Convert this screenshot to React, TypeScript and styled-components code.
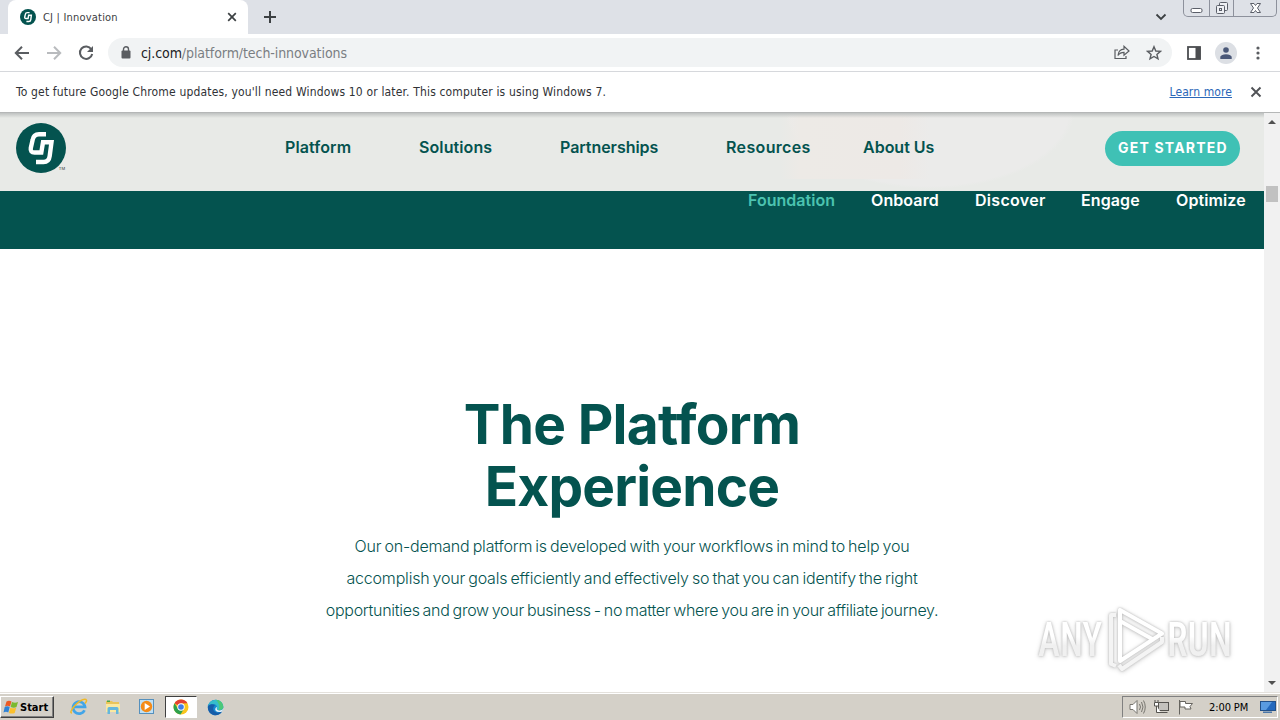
import styled, { createGlobalStyle } from "styled-components";

const Color = {
  Green: "#04534f",
  Teal: "#3fc1b5",
  Chrome: "#dee1e7",
  Icon: "#5a5d61",
  Taskbar: "#d4d0c8",
};

const siteMenu = [
  { label: "Platform", gap: 0, width: 66, track: 0.1 },
  { label: "Solutions", gap: 68, width: 73, track: 0.1 },
  { label: "Partnerships", gap: 68, width: 98, track: -0.05 },
  { label: "Resources", gap: 68, width: 85, track: 0.35 },
  { label: "About Us", gap: 52, width: 71, track: 0 },
];

const sections = [
  { label: "Foundation", gap: 0, width: 87, track: 0.02 },
  { label: "Onboard", gap: 36, width: 68, track: 0.1 },
  { label: "Discover", gap: 36, width: 70, track: 0.3 },
  { label: "Engage", gap: 36, width: 59, track: 0.1 },
  { label: "Optimize", gap: 36, width: 70, track: 0.1 },
];

const copy = [
  { text: "Our on-demand platform is developed with your workflows in mind to help you", track: -0.19 },
  { text: "accomplish your goals efficiently and effectively so that you can identify the right", track: -0.19 },
  { text: "opportunities and grow your business - no matter where you are in your affiliate journey.", track: -0.29 },
];

const CjLogo = ({ size }: { size: number }) => (
  <svg width={size} height={size} viewBox="0 0 50 50">
    <circle cx="25" cy="25" r="25" fill={Color.Green} />
    <path
      d="M30 11.2H23Q17.5 11.2 16.6 17L14.8 25Q14 29.5 18.5 29.5H25.3L27 19.3H35.5L33.7 33Q33 39 27.5 39H20"
      fill="none"
      stroke="#fff"
      strokeWidth="4.4"
    />
  </svg>
);

const TabStrip = () => (
  <Strip>
    <Tab>
      <CjLogo size={16} />
      <TabTitle>CJ | Innovation</TabTitle>
      <svg width="10" height="10" viewBox="0 0 10 10">
        <path d="M1.2 1.2L8.8 8.8M8.8 1.2L1.2 8.8" stroke="#3c4043" strokeWidth="1.7" />
      </svg>
    </Tab>
    <NewTab width="14" height="14" viewBox="0 0 14 14">
      <path d="M7 1V13M1 7H13" stroke="#3c4043" strokeWidth="2" />
    </NewTab>
    <TabSearch width="12" height="8" viewBox="0 0 12 8">
      <path d="M1.5 1.5L6 6L10.5 1.5" fill="none" stroke="#3c4043" strokeWidth="1.8" />
    </TabSearch>
    <WindowButtons>
      <WindowButton $width={25}>
        <svg width="13" height="17" viewBox="0 0 13 17">
          <rect x="1" y="8.5" width="11" height="4" rx="1.5" fill="#fff" stroke="#5b5f69" />
        </svg>
      </WindowButton>
      <WindowButton $width={25}>
        <svg width="14" height="17" viewBox="0 0 14 17" fill="#eef0f4" stroke="#5b5f69">
          <rect x="4.5" y="2.5" width="8" height="8" rx="1" />
          <rect x="1.5" y="5.5" width="8" height="8" rx="1" />
          <rect x="4.5" y="8.5" width="2" height="2" />
        </svg>
      </WindowButton>
      <WindowButton $width={43}>
        <svg width="13" height="17" viewBox="0 0 13 17">
          <path
            d="M1.5 3.5H5L6.5 5.5L8 3.5H11.5L8.5 8L11.5 12.5H8L6.5 10.5L5 12.5H1.5L4.5 8Z"
            fill="#fff"
            stroke="#5b5f69"
          />
        </svg>
      </WindowButton>
    </WindowButtons>
  </Strip>
);

const AddressBar = () => (
  <Toolbar>
    <ToolIcon $gap={14} width="16" height="16" viewBox="0 0 16 16">
      <path d="M15 8H2M8 1.8L1.8 8L8 14.2" fill="none" stroke={Color.Icon} strokeWidth="2" />
    </ToolIcon>
    <ToolIcon $gap={16} width="16" height="16" viewBox="0 0 16 16">
      <path d="M1 8H14M8 1.8L14.2 8L8 14.2" fill="none" stroke="#b9bbbe" strokeWidth="2" />
    </ToolIcon>
    <ToolIcon $gap={16} width="16" height="16" viewBox="0 0 16 16">
      <path d="M13.3 4.2A6.2 6.2 0 1 0 14.2 9" fill="none" stroke={Color.Icon} strokeWidth="2" />
      <path d="M15 1V7H9Z" fill={Color.Icon} />
    </ToolIcon>
    <Omnibox>
      <svg width="10" height="13" viewBox="0 0 10 13">
        <rect x="0.5" y="4.5" width="9" height="8" rx="1" fill={Color.Icon} />
        <path d="M2.5 5V3.3A2.5 2.5 0 0 1 7.5 3.3V5" fill="none" stroke={Color.Icon} strokeWidth="1.4" />
      </svg>
      <Url>
        <b>cj.com</b>/platform/tech-innovations
      </Url>
      <svg width="16" height="15" viewBox="0 0 16 15" fill="none" stroke={Color.Icon} strokeWidth="1.2">
        <path d="M4 5H1V13.5H12V11" />
        <path d="M4 10.5Q4.5 4.5 10 4.2V1.3L15 6L10 10.2V7.4Q6 7.4 4 10.5Z" />
      </svg>
      <StarIcon width="16" height="16" viewBox="0 0 16 16">
        <path
          d="M8 1.7L9.8 6L14.4 6.4L10.9 9.4L12 13.9L8 11.5L4 13.9L5.1 9.4L1.6 6.4L6.2 6Z"
          fill="none"
          stroke={Color.Icon}
          strokeWidth="1.4"
        />
      </StarIcon>
    </Omnibox>
    <ToolIcon $gap={15} width="14" height="14" viewBox="0 0 14 14">
      <rect x="1" y="1" width="12" height="12" fill="none" stroke="#4b4d50" strokeWidth="1.8" />
      <rect x="8.5" y="1" width="5" height="12" fill="#4b4d50" />
    </ToolIcon>
    <Avatar>
      <svg width="12" height="12" viewBox="0 0 12 12" fill="#4a5878">
        <circle cx="6" cy="3" r="2.8" />
        <path d="M0.3 12V9.8Q1.5 7.2 6 7.2T11.7 9.8V12Z" />
      </svg>
    </Avatar>
    <ToolIcon $gap={19} width="4" height="14" viewBox="0 0 4 14" fill={Color.Icon}>
      <circle cx="2" cy="2" r="1.6" />
      <circle cx="2" cy="7" r="1.6" />
      <circle cx="2" cy="12" r="1.6" />
    </ToolIcon>
  </Toolbar>
);

const Watermark = () => (
  <WatermarkSvg width="216" height="74" viewBox="0 0 216 74">
    <defs>
      <linearGradient id="fade" x1="0" y1="0" x2="0" y2="1">
        <stop offset="0.45" stopColor="#fff" />
        <stop offset="0.6" stopColor="#f0f0f0" />
      </linearGradient>
    </defs>
    <g fill="url(#fade)" fontFamily="Roboto, sans-serif" fontSize="49" fontWeight="500">
      <text transform="translate(8 52) scale(0.76 1)">ANY</text>
      <text transform="translate(137 52) scale(0.77 1)">RUN</text>
    </g>
    <g fill="none" stroke="#fff" strokeWidth="4" strokeLinejoin="round">
      <path d="M90 6V57L132 29.5Z" />
      <path d="M86 11H81V60L86 62M89 61L92 65L132 38V33" stroke="#f4f4f4" />
      <path d="M90 17L124 36" />
    </g>
  </WatermarkSvg>
);

const Taskbar = () => (
  <Bar>
    <StartButton>
      <svg width="17" height="16" viewBox="0 0 17 15">
        <path d="M3.5 2Q6 0.5 8.5 2L7 7Q4.5 5.6 2 7Z" fill="#ec5a24" />
        <path d="M9 2.5Q12 3.8 15 2.5L13.5 7.5Q11 8.8 7.6 7.5Z" fill="#7ab92f" />
        <path d="M1.7 7.5Q4.2 6.2 6.7 7.5L5.3 13Q3 11.7 0.5 13Z" fill="#2f83d6" />
        <path d="M7.3 8.2Q10 9.5 13.2 8.2L11.7 13.5Q9 14.7 5.9 13.5Z" fill="#fbc02d" />
      </svg>
      Start
    </StartButton>
    <TaskButton>
      <svg width="18" height="18" viewBox="0 0 18 18" fill="none">
        <path d="M14.5 12.2A6 6 0 1 1 15 8.8H4" stroke="#42a5e8" strokeWidth="2.7" />
        <path d="M2 15Q-1 15 4 8.5Q12 0 16 1.5Q17.5 2.5 15 5.5" stroke="#efb928" strokeWidth="1.5" />
      </svg>
    </TaskButton>
    <TaskButton>
      <svg width="18" height="18" viewBox="0 0 18 18">
        <path d="M2 3H8L9 4H15V14H2Z" fill="#e9c45a" />
        <path d="M2 6H16V14H2Z" fill="#fae8a0" />
        <path d="M3.5 16V10.5Q3.5 9 5 9H13Q14.5 9 14.5 10.5V16H12V12H6V16Z" fill="#65b7dc" />
        <path d="M3 2.5H6V4H3Z" fill="#49a546" />
      </svg>
    </TaskButton>
    <TaskButton>
      <svg width="18" height="18" viewBox="0 0 18 18">
        <rect x="1.5" y="1.5" width="14" height="14" fill="#bfe0f5" stroke="#5590bd" />
        <circle cx="8.5" cy="8.5" r="5.7" fill="#f48b18" />
        <path d="M6.7 5L12 8.5L6.7 12Z" fill="#fff" />
      </svg>
    </TaskButton>
    <TaskButton $active>
      <svg width="16" height="16" viewBox="0 0 16 16">
        <circle cx="8" cy="8" r="7.5" fill="#f9c51e" />
        <path d="M8 8L1.5 4.25A7.5 7.5 0 0 1 14.5 4.25L8 4.5Z" fill="#e34133" />
        <path d="M1.5 4.25A7.5 7.5 0 0 0 7.5 15.5L11 9.75L5 9.75Z" fill="#2da14d" />
        <circle cx="8" cy="8" r="3.7" fill="#fff" />
        <circle cx="8" cy="8" r="2.8" fill="#3f7de8" />
      </svg>
    </TaskButton>
    <TaskButton>
      <svg width="17" height="17" viewBox="0 0 17 17">
        <circle cx="8.5" cy="8.5" r="7.8" fill="#1688d1" />
        <path d="M1 7Q3 0.7 9 0.7Q16 1.5 16.3 8Q16 11.5 11.5 11Q9 10.5 10 8.5Q10 4.5 5 5Q2 5.5 1 7Z" fill="#35bccb" />
        <path d="M9 0.7Q16 1.5 16.3 8Q16 11.5 11.5 11Q14 6 9 0.7Z" fill="#4cc878" />
        <path d="M1 7Q4 4 8 6Q5 9 7 12Q10 15 15 12.5Q12 17 7 16.2Q0 14 1 7Z" fill="#165ca8" />
        <path d="M10 8Q9 11 12 11.5Q15 11.7 16.5 9.5L15.2 12.5Q10.5 14 8.5 11.5Q7.5 9 10 8Z" fill="#e8f2f8" />
      </svg>
    </TaskButton>
    <Tray>
      <svg width="17" height="16" viewBox="0 0 17 16" fill="none" stroke="#77756f">
        <path d="M1 5.5H4L8 1.5V14.5L4 10.5H1Z" fill="#fff" />
        <path d="M10.5 5Q12.5 8 10.5 11M12.5 3Q15.5 8 12.5 13M14.5 1.5Q18 8 14.5 14.5" />
      </svg>
      <svg width="17" height="16" viewBox="0 0 17 16" fill="#fff" stroke="#55534f">
        <rect x="5.5" y="3.5" width="10" height="8" fill="#c4c2bd" />
        <path d="M2 1V3M5 1V3M1.5 3.5H5.5V7H1.5ZM3.5 7V13.5H8M7.5 13.5H14.5" />
      </svg>
      <svg width="17" height="16" viewBox="0 0 17 16" fill="#fff" stroke="#66645f">
        <path d="M2.5 1V15.5M3 2.5H8.5V4.5H15.5L13 7.5L14 10H8V8H3Z" />
      </svg>
      <Clock>2:00 PM</Clock>
      <svg width="16" height="14" viewBox="0 0 16 14">
        <rect x="0.5" y="1.5" width="15" height="9" fill="#2469bd" stroke="#225089" />
        <path d="M1 2H12L6 10H1Z" fill="#5a9be0" />
        <rect x="3" y="11.5" width="9" height="1.5" fill="#4b76a8" />
      </svg>
    </Tray>
  </Bar>
);

const App = () => {
  return (
    <Screen>
      <GlobalStyle />
      <TabStrip />
      <AddressBar />
      <InfoBar>
        <InfoText>
          To get future Google Chrome updates, you'll need Windows 10 or later. This computer is using Windows 7.
        </InfoText>
        <LearnMore>Learn more</LearnMore>
        <svg width="12" height="12" viewBox="0 0 12 12">
          <path d="M1.5 1.5L10.5 10.5M10.5 1.5L1.5 10.5" stroke="#505256" strokeWidth="1.9" />
        </svg>
      </InfoBar>
      <Viewport>
        <Page>
          <SiteHeader>
            <Brand>
              <CjLogo size={50} />
              <Trademark>TM</Trademark>
            </Brand>
            <SiteMenu>
              {siteMenu.map((item) => (
                <MenuItem key={item.label} $gap={item.gap} $width={item.width} $track={item.track}>
                  {item.label}
                </MenuItem>
              ))}
            </SiteMenu>
            <GetStarted>GET STARTED</GetStarted>
          </SiteHeader>
          <SectionBar>
            {sections.map((item, i) => (
              <SectionItem
                key={item.label}
                $gap={item.gap}
                $width={item.width}
                $track={item.track}
                $active={i === 0}
              >
                {item.label}
              </SectionItem>
            ))}
          </SectionBar>
          <Hero>
            <Title>
              <TitleLine $track={-0.7}>The Platform</TitleLine>
              <TitleLine $track={-0.8}>Experience</TitleLine>
            </Title>
            {copy.map((line) => (
              <CopyLine key={line.text} $track={line.track}>
                {line.text}
              </CopyLine>
            ))}
          </Hero>
          <Watermark />
        </Page>
        <Scrollbar>
          <svg width="8" height="4" viewBox="0 0 8 4">
            <path d="M0 4L4 0L8 4Z" fill="#505050" />
          </svg>
          <Thumb />
          <svg width="8" height="4" viewBox="0 0 8 4">
            <path d="M0 0L4 4L8 0Z" fill="#505050" />
          </svg>
        </Scrollbar>
      </Viewport>
      <Taskbar />
    </Screen>
  );
};

const GlobalStyle = createGlobalStyle`
  * {
    box-sizing: border-box;
  }
  body {
    margin: 0;
    overflow: hidden;
  }
  svg {
    display: block;
    flex-shrink: 0;
  }
`;

const Screen = styled.div`
  width: 1280px;
  height: 720px;
  display: flex;
  flex-direction: column;
  overflow: hidden;
  background: #fff;
  font-family: "DejaVu Sans Condensed", "DejaVu Sans", sans-serif;
  font-stretch: condensed;
  white-space: nowrap;
`;

const Strip = styled.div`
  height: 34px;
  flex-shrink: 0;
  display: flex;
  background: ${Color.Chrome};
`;

const Tab = styled.div`
  width: 240px;
  height: 34px;
  margin-left: 8px;
  padding: 0 11px 0 12px;
  display: flex;
  align-items: center;
  border-radius: 8px 8px 0 0;
  background: #fff;
`;

const TabTitle = styled.div`
  flex: 1;
  margin-left: 7px;
  font-size: 11px;
  letter-spacing: 0.2px;
  color: #3c4043;
`;

const NewTab = styled.svg`
  margin: 10px 0 0 15px;
`;

const TabSearch = styled.svg`
  margin: 13px 16px 0 auto;
`;

const WindowButtons = styled.div`
  display: flex;
  width: 94px;
  height: 17px;
  margin-right: 3px;
  border: 1px solid #8d919c;
  border-top: none;
  border-radius: 0 0 5px 5px;
`;

const WindowButton = styled.div<{ $width: number }>`
  width: ${({ $width }) => $width}px;
  display: flex;
  justify-content: center;
  & + & {
    border-left: 1px solid #8d919c;
  }
`;

const Toolbar = styled.div`
  height: 38px;
  flex-shrink: 0;
  display: flex;
  align-items: center;
  border-bottom: 1px solid #d6d8dc;
`;

const ToolIcon = styled.svg<{ $gap: number }>`
  margin-left: ${({ $gap }) => $gap}px;
`;

const Omnibox = styled.div`
  width: 1064px;
  height: 29px;
  margin-left: 14px;
  padding: 0 10px 0 13px;
  display: flex;
  align-items: center;
  border-radius: 15px;
  background: #f1f3f4;
`;

const Url = styled.div`
  flex: 1;
  margin-left: 10px;
  font-size: 14px;
  letter-spacing: -0.08px;
  color: #7a7e82;
  b {
    font-weight: 400;
    color: #202124;
  }
`;

const StarIcon = styled.svg`
  margin-left: 16px;
`;

const Avatar = styled.div`
  width: 22px;
  height: 22px;
  margin-left: 14px;
  display: flex;
  align-items: center;
  justify-content: center;
  border-radius: 50%;
  background: #dcdfe4;
`;

const InfoBar = styled.div`
  height: 41px;
  flex-shrink: 0;
  display: flex;
  align-items: center;
  padding: 0 18px 0 16px;
  border-bottom: 1px solid #b5b7b7;
  font-size: 12px;
  color: #303236;
`;

const InfoText = styled.div`
  flex: 1;
  letter-spacing: 0.16px;
`;

const LearnMore = styled.div`
  margin-right: 18px;
  letter-spacing: 0.1px;
  color: #2b67b8;
  text-decoration: underline;
`;

const Viewport = styled.div`
  height: 579px;
  flex-shrink: 0;
  display: flex;
`;

const Page = styled.div`
  position: relative;
  width: 1264px;
  font-family: Inter, sans-serif;
`;

const SiteHeader = styled.div`
  height: 78px;
  display: flex;
  align-items: center;
  padding: 0 24px 8px 16px;
  background:
    linear-gradient(#bfc2c1, #e8eae700 5px),
    linear-gradient(90deg, #e8eae700 780px, #edeae6 800px, #ede9e6 900px, #ebebea00 930px) 0 0 / 1264px 66px no-repeat,
    radial-gradient(ellipse 145px 80px at 930px -4px, #ebebea 96%, #ebebea00),
    #e8eae7;
`;

const Brand = styled.div`
  position: relative;
  width: 50px;
`;

const Trademark = styled.span`
  position: absolute;
  right: 1px;
  bottom: 2px;
  font-size: 4px;
  line-height: 4px;
  color: #333;
`;

const SiteMenu = styled.div`
  flex: 1;
  display: flex;
  margin-left: 219px;
  margin-top: -3px;
`;

const MenuItem = styled.div<{ $gap: number; $width: number; $track: number }>`
  width: ${({ $width }) => $width}px;
  margin-left: ${({ $gap }) => $gap}px;
  font-size: 16px;
  line-height: 20px;
  font-weight: 600;
  letter-spacing: ${({ $track }) => $track}px;
  color: ${Color.Green};
`;

const GetStarted = styled.div`
  width: 135px;
  height: 35px;
  border-radius: 18px;
  background: ${Color.Teal};
  color: #fff;
  font-size: 14px;
  font-weight: 700;
  line-height: 34px;
  letter-spacing: 1.2px;
  padding-left: 13px;
`;

const SectionBar = styled.div`
  height: 58px;
  display: flex;
  padding-left: 748px;
  background: ${Color.Green};
`;

const SectionItem = styled(MenuItem)<{ $active: boolean }>`
  line-height: 18px;
  color: ${({ $active }) => ($active ? "#4cc3b0" : "#fff")};
`;

const Hero = styled.div`
  display: flex;
  flex-direction: column;
  align-items: center;
  padding-top: 144px;
`;

const Title = styled.h1`
  margin: 0 0 13px;
  display: flex;
  flex-direction: column;
  align-items: center;
  font-size: 55px;
  line-height: 62px;
  font-weight: 700;
  color: ${Color.Green};
`;

const TitleLine = styled.span<{ $track: number }>`
  letter-spacing: ${({ $track }) => $track}px;
`;

const CopyLine = styled.div<{ $track: number }>`
  font-size: 16px;
  line-height: 32px;
  font-weight: 300;
  word-spacing: -1.2px;
  letter-spacing: ${({ $track }) => $track}px;
  color: ${Color.Green};
`;

const WatermarkSvg = styled.svg`
  position: absolute;
  right: 18px;
  bottom: 14px;
  filter: drop-shadow(0 0 1px #b8b8b8) drop-shadow(0 1px 2px #d8d8d8);
`;

const Scrollbar = styled.div`
  width: 16px;
  display: flex;
  flex-direction: column;
  align-items: center;
  padding: 7px 0;
  background: #f1f1f1;
  svg:last-child {
    margin-top: auto;
  }
`;

const Thumb = styled.div`
  width: 12px;
  height: 16px;
  margin-top: 62px;
  background: #c1c1c1;
`;

const Bar = styled.div`
  height: 28px;
  flex-shrink: 0;
  display: flex;
  align-items: center;
  padding: 2px 2px 0 0;
  background: ${Color.Taskbar};
  box-shadow: inset 0 1px #e4e1dc, inset 0 2px #fff;
`;

const StartButton = styled.div`
  width: 54px;
  height: 22px;
  margin-right: 9px;
  display: flex;
  align-items: center;
  padding-left: 2px;
  border: 1px solid;
  border-color: #fff #404040 #404040 #fff;
  box-shadow: inset -1px -1px #808080;
  font-size: 11px;
  font-weight: 700;
  color: #000;
`;

const TaskButton = styled.div<{ $active?: boolean }>`
  width: 32px;
  height: 22px;
  margin-right: 2px;
  display: flex;
  align-items: center;
  justify-content: center;
  border: 1px solid;
  border-color: ${({ $active }) => ($active ? "#404040 #fff #fff #404040" : "transparent")};
  background: ${({ $active }) => ($active ? "#fff" : "transparent")};
`;

const Tray = styled.div`
  width: 156px;
  height: 22px;
  margin-left: auto;
  display: flex;
  align-items: center;
  gap: 7px;
  padding-left: 6px;
  border: 1px solid;
  border-color: #808080 #fff #fff #808080;
`;

const Clock = styled.div`
  width: 44px;
  margin-left: 8px;
  font-size: 11px;
  letter-spacing: -0.1px;
  color: #000;
`;

export default App;
